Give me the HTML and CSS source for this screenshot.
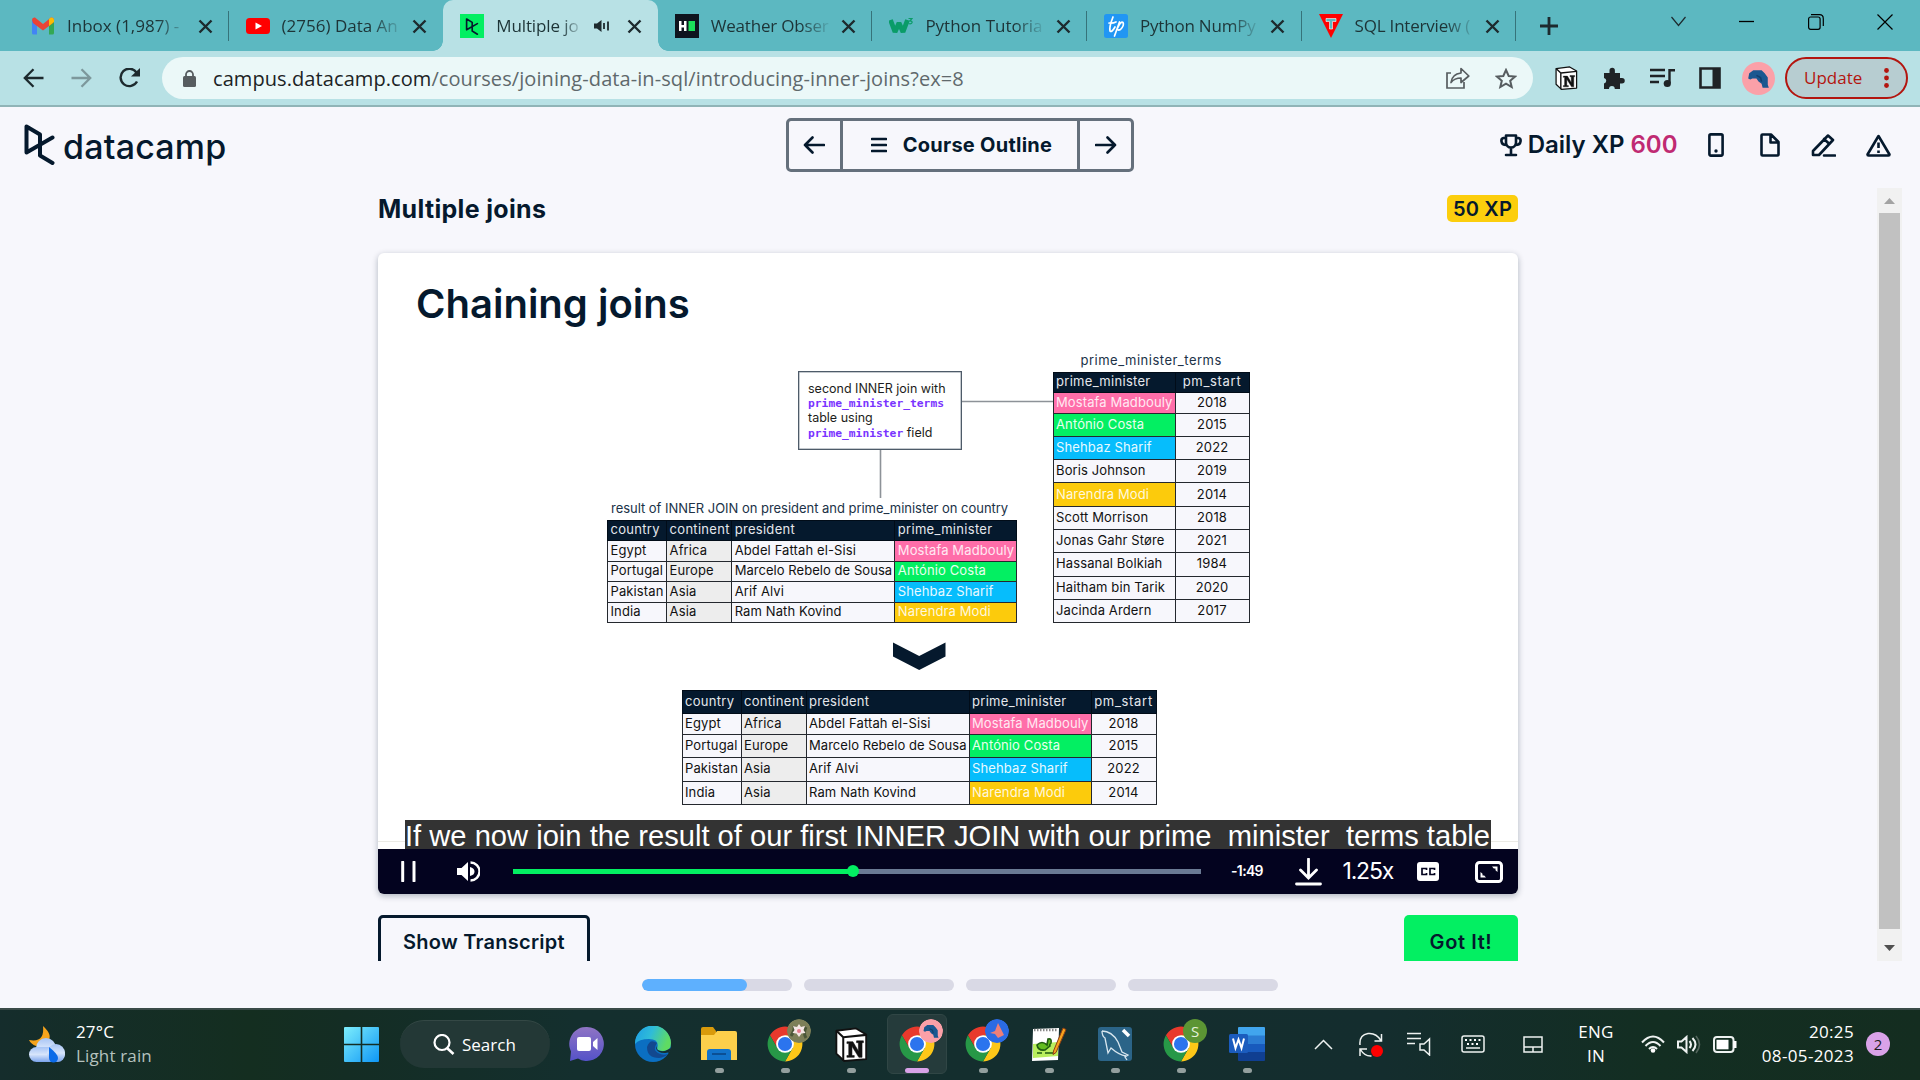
FILE: index.html
```html
<!DOCTYPE html>
<html lang="en">
<head>
<meta charset="utf-8">
<title>Multiple joins</title>
<link rel="stylesheet" href="styles.css">
</head>
<body>
<svg class="defs" width="0" height="0">
  <defs>
    <symbol id="x" viewBox="0 0 15 15"><path d="M1.500 1.500l12 12M13.500 1.500l-12 12" stroke="#1d2a2e" stroke-width="2.400" fill="none"/></symbol>
    <symbol id="dc" viewBox="0 0 31 41"><path d="M16 21.500V10.500L2.500 2.500V28.500L28.500 13.500M16 21.500V31.500L28.500 39" fill="none" stroke="currentColor" stroke-width="4" stroke-linejoin="round" stroke-linecap="round"/></symbol>
    <symbol id="chrome" viewBox="0 0 48 48">
      <path d="M24 13H43.050A22 22 0 0 0 4.950 13L14.470 29.500Z" fill="#e8392c"/>
      <path d="M24 13H43.050A22 22 0 0 1 24 46L33.530 29.500Z" fill="#fdc718"/>
      <path d="M4.950 13A22 22 0 0 0 24 46L33.530 29.500H14.470Z" fill="#279847"/>
      <circle cx="24" cy="24" r="11.200" fill="#fff"/><circle cx="24" cy="24" r="8.900" fill="#2b74ee"/>
    </symbol>
    <symbol id="notion" viewBox="0 0 36 38">
      <path d="M1.500 4L23 1.500L34 8V35L10 37L1.500 29Z" fill="#fff" stroke="#111" stroke-width="2" stroke-linejoin="round"/>
      <path d="M1.500 4L9 11V37M9 11L34 8.500" fill="none" stroke="#111" stroke-width="2.200"/>
      <path d="M13 16h6.500l6 10V17h-2v-2H31v2h-1.500v16h-3.500l-7.500-12V31h2.500v2H13v-2h2V18h-2z" fill="#111" stroke="#111" stroke-width=".6"/>
    </symbol>
    <symbol id="elephant" viewBox="0 0 32 32"><circle cx="16" cy="16" r="16" fill="#fba0a8"/><path d="M6 16L7 11L11 8H19L22 11L25 15V22L26 25H20L19 21L16 19L14 16H10L8 17Z" fill="#1b5790"/><path d="M14 13l4 2 1 4" stroke="#123f6d" stroke-width="1.500" fill="none"/></symbol>
  </defs>
</svg>

<div class="tabstrip">
  <div class="tab">
    <svg class="fav" viewBox="0 0 24 24"><path d="M1 6v13q0 1.500 1.500 1.500H6V9z" fill="#4285f4"/><path d="M18 9v11.500h3.500q1.500 0 1.500-1.500V6z" fill="#34a853"/><path d="M1 6q0-3 3-2.500L12 10l8-6.500q3-.5 3 2.500l-1 3-10 7.500L2 9z" fill="#ea4335"/><path d="M18 5l2-1.500q3-.5 3 2.500v2l-5 4z" fill="#fbbc04"/></svg>
    <span class="label">Inbox (1,987) -</span><svg class="close"><use href="#x"/></svg>
  </div>
  <div class="tab nosep">
    <svg class="fav" viewBox="0 0 24 24"><rect y="4" width="24" height="16" rx="3.500" fill="#f00"/><path d="M9.500 8.500v7l6.500-3.500z" fill="#fff"/></svg>
    <span class="label">(2756) Data An</span><svg class="close"><use href="#x"/></svg>
  </div>
  <div class="tab active nosep">
    <span class="fav dcfav"><svg width="14" height="17"><use href="#dc"/></svg></span>
    <span class="label short">Multiple jo</span>
    <svg class="audio" viewBox="0 0 16 14"><path d="M0 4.500h3L7.500 1v12L3 9.500H0z" fill="#1d2a2e"/><path d="M10 4v6M14 2.500v9" stroke="#1d2a2e" stroke-width="1.800"/></svg>
    <svg class="close"><use href="#x"/></svg>
  </div>
  <div class="tab">
    <svg class="fav" viewBox="0 0 24 24"><path d="M0 0h24v24H0z" fill="#0e141e"/><path d="M4 7h2.500v4H9V7h2.500v10H9v-3.500H6.500V17H4z" fill="#fff"/><path d="M13.500 7H20v10h-6.500z" fill="#1be05a"/></svg>
    <span class="label tight">Weather Obser</span><svg class="close"><use href="#x"/></svg>
  </div>
  <div class="tab">
    <svg class="fav" viewBox="0 0 24 24"><path d="M1.500 6l4.500 12 4-9 4 9 4.500-12" fill="none" stroke="#0a9c68" stroke-width="4.800" stroke-linejoin="bevel"/><path d="M19.500 4.500H23l-2 2.300q2.500.2 2 2-.8 1.500-3.500.7" fill="none" stroke="#0a9c68" stroke-width="1.200"/></svg>
    <span class="label">Python Tutoria</span><svg class="close"><use href="#x"/></svg>
  </div>
  <div class="tab">
    <svg class="fav" viewBox="0 0 24 24"><rect width="24" height="24" rx="2.500" fill="#2196f3"/><path d="M9 3Q5 13 6 17q1.500 2 5-4M5 9q4 .5 7-1M15.500 8l-5 14M14 13q3-6 5-4.500 1.500 3-2.500 7-3 1.500-3-1" fill="none" stroke="#fff" stroke-width="1.700" stroke-linecap="round"/></svg>
    <span class="label tight">Python NumPy</span><svg class="close"><use href="#x"/></svg>
  </div>
  <div class="tab">
    <svg class="fav" viewBox="0 0 24 24"><path d="M0 0h24L12 24z" fill="#f00"/><path d="M7 4.500h10v3h-3.500V15h-3V7.500H7z" fill="#5cb8c1" stroke="#fff" stroke-width=".6"/></svg>
    <span class="label tight">SQL Interview (</span><svg class="close"><use href="#x"/></svg>
  </div>
  <svg class="plus" width="18" height="18"><path d="M9 0v18M0 9h18" stroke="#1d2a2e" stroke-width="2.800"/></svg>
  <div class="winctl">
    <svg width="15" height="15"><path d="M.5 3l7 8.500L14.500 3" fill="none" stroke="#1d2a2e" stroke-width="1.200"/></svg>
    <svg width="15" height="15"><path d="M0 7.500h15" stroke="#000" stroke-width="1.300"/></svg>
    <svg width="16" height="16"><rect x=".6" y="3" width="11.500" height="12.300" rx="2" fill="none" stroke="#000" stroke-width="1.200"/><path d="M3 .7h8.500q3.800 0 3.800 4V12" fill="none" stroke="#000" stroke-width="1.200"/></svg>
    <svg width="16" height="16"><path d="M.5.5l15 15M15.500.5l-15 15" stroke="#000" stroke-width="1.200"/></svg>
  </div>
</div>

<div class="toolbar">
  <svg class="back" width="21" height="20"><path d="M20.500 10H2M10.500 1.200L1.800 10l8.700 8.800" fill="none" stroke="#1d2a2e" stroke-width="2.300"/></svg>
  <svg class="fwd" width="21" height="20"><path d="M.5 10H19M10.500 1.200l8.700 8.800-8.700 8.800" fill="none" stroke="#7d989c" stroke-width="2.300"/></svg>
  <svg class="reload" width="22" height="20"><path d="M17.500 4.500A8.700 8.700 0 1 0 18 13.500" fill="none" stroke="#1d2a2e" stroke-width="2.400"/><path d="M21 0v8.500h-9z" fill="#1d2a2e"/></svg>
  <div class="omnibox">
    <svg width="13" height="17"><rect y="6" width="13" height="11" rx="1.500" fill="#575d60"/><path d="M3 7V4.500a3.500 3.500 0 0 1 7 0V7" fill="none" stroke="#575d60" stroke-width="1.800"/></svg>
    <span class="url"><b>campus.datacamp.com</b>/courses/joining-data-in-sql/introducing-inner-joins?ex=8</span>
    <svg class="share" width="24" height="22"><path d="M5 6H1v15h17v-6" fill="none" stroke="#575d60" stroke-width="1.700"/><path d="M5 15.500Q6 7 15 6V1.500L22.800 9 15 15.500V11Q8.500 11 5 15.500z" fill="none" stroke="#575d60" stroke-width="1.700" stroke-linejoin="round"/></svg>
    <svg class="star" width="22" height="21"><path d="M11 2l2.700 6 6.300.6-4.800 4.200L16.700 19 11 15.700 5.300 19l1.500-6.200L2 8.600 8.300 8z" fill="none" stroke="#575d60" stroke-width="2"/></svg>
  </div>
  <svg class="ext" width="23" height="24"><use href="#notion"/></svg>
  <svg class="puzzle" width="22" height="22"><path d="M1 6h5.500V3.500a2.700 2.700 0 0 1 5.400 0V6H17v5h2a2.700 2.700 0 0 1 0 5.500h-2V22h-5.200a2.900 2.900 0 0 0-5.800 0H1v-5.500a2.800 2.800 0 0 0 0-5.500z" fill="#1f2326"/></svg>
  <svg class="queue" width="25" height="20"><path d="M0 2h15M0 8h15M0 14h9" stroke="#1f2326" stroke-width="2.300"/><path d="M19.500 15V2.200H25" fill="none" stroke="#1f2326" stroke-width="2.400"/><circle cx="17.300" cy="15.500" r="3.600" fill="#1f2326"/></svg>
  <svg class="panel" width="22" height="22"><path d="M1.500 1.500h19v19h-19z" fill="none" stroke="#1f2326" stroke-width="2.600"/><path d="M13.500 1.500h7v19h-7z" fill="#1f2326"/></svg>
  <svg class="avatar" width="33" height="33"><use href="#elephant"/></svg>
  <div class="update"><span>Update</span><svg width="5" height="20"><g fill="#b3150f"><circle cx="2.500" cy="2.500" r="2.400"/><circle cx="2.500" cy="10" r="2.400"/><circle cx="2.500" cy="17.500" r="2.400"/></g></svg></div>
</div>

<header class="head">
  <div class="logo"><svg width="31" height="41"><use href="#dc"/></svg><span>datacamp</span></div>
  <nav class="nav">
    <div class="cell side prev"><svg width="22" height="18"><path d="M21 9H2M9.500 1.500L2 9l7.500 7.500" class="ln"/></svg></div>
    <div class="cell mid"><svg width="16" height="16"><path d="M1 2h14M1 8h14M1 14h14" class="ln"/></svg><span>Course Outline</span></div>
    <div class="cell side"><svg width="22" height="18"><path d="M1 9h19M12.500 1.500L20 9l-7.500 7.500" class="ln"/></svg></div>
  </nav>
  <div class="tools">
    <svg class="cup" width="22" height="23"><path d="M6 1.500h10v7a5 5 0 0 1-10 0zM6 4H3.500Q1 4.500 1.500 7.500 2 11 6.500 11M16 4h2.500q2.500.5 2 3.500-.5 3.500-5 3.500M11 14v7M6 21h10" class="ln"/></svg>
    <span class="xp">Daily XP <em>600</em></span>
    <svg class="phone" width="16" height="24"><rect x="1.400" y="1.400" width="13.200" height="21.200" rx="1.500" class="ln"/><circle cx="8" cy="18" r="1.700" fill="#05192d"/></svg>
    <svg class="file" width="20" height="24"><path d="M1.500 2.500q0-1 1-1H11l7.500 7.500v12.500q0 1-1 1h-15q-1 0-1-1zM10.500 1.500V9.500h8" class="ln"/></svg>
    <svg class="pen" width="25" height="24"><path d="M2 18L17 2.500l5 4.500L8 22H2zM13 6l5.500 5M13 22.500h11" class="ln"/></svg>
    <svg class="warn" width="25" height="23"><path d="M12.500 2L1.500 20.500q0 1 1 1h20q1 0 1-1z" class="ln"/><path d="M12.500 8.500v5.500M12.500 16.500v2.500" stroke="#05192d" stroke-width="2.600"/></svg>
  </div>
</header>

<main class="scroll">
  <section class="content">
    <div class="titlebar"><h1>Multiple joins</h1><span class="badge">50 XP</span></div>
    <div class="card">
      <div class="slide">
        <h2>Chaining joins</h2>
        <svg class="wires" width="1140" height="596"><path d="M583 148.500h92M502.500 197v48" stroke="#8d9298" stroke-width="1.600"/><path d="M515 389.500l26.200 13.500L567.500 389.500V403.500L541.200 417 515 403.500z" fill="#05192d"/><path d="M0 588.500h27M1113 588.500h27" stroke="#ebebe6"/></svg>
        <div class="note"><div>second INNER join with</div><div><code>prime_minister_terms</code></div><div>table using</div><div><code>prime_minister</code> field</div></div>
        <p class="cap capr">prime_minister_terms</p>
        <table class="terms">
          <colgroup><col class="pm"><col class="yr"></colgroup>
          <tr class="h"><th>prime_minister<th class="c">pm_start</tr>
          <tr class="s"><td class="pink">Mostafa Madbouly<td class="c">2018</tr>
          <tr><td class="green">António Costa<td class="c">2015</tr>
          <tr><td class="blue">Shehbaz Sharif<td class="c">2022</tr>
          <tr><td>Boris Johnson<td class="c">2019</tr>
          <tr><td class="gold">Narendra Modi<td class="c">2014</tr>
          <tr><td>Scott Morrison<td class="c">2018</tr>
          <tr><td>Jonas Gahr Støre<td class="c">2021</tr>
          <tr><td>Hassanal Bolkiah<td class="c">1984</tr>
          <tr><td>Haitham bin Tarik<td class="c">2020</tr>
          <tr><td>Jacinda Ardern<td class="c">2017</tr>
        </table>
        <p class="cap capl">result of INNER JOIN on president and prime_minister on country</p>
        <table class="first">
          <colgroup><col class="co"><col class="ct"><col class="pr"><col class="pm"></colgroup>
          <tr><th>country<th>continent<th>president<th>prime_minister</tr>
          <tr><td>Egypt<td class="grey">Africa<td>Abdel Fattah el-Sisi<td class="pink">Mostafa Madbouly</tr>
          <tr><td>Portugal<td class="grey">Europe<td class="snug">Marcelo Rebelo de Sousa<td class="green">António Costa</tr>
          <tr><td>Pakistan<td class="grey">Asia<td>Arif Alvi<td class="blue">Shehbaz Sharif</tr>
          <tr><td>India<td class="grey">Asia<td>Ram Nath Kovind<td class="gold">Narendra Modi</tr>
        </table>
        <table class="final">
          <colgroup><col class="co"><col class="ct"><col class="pr"><col class="pm"><col class="yr"></colgroup>
          <tr><th>country<th>continent<th>president<th>prime_minister<th class="c">pm_start</tr>
          <tr class="s"><td>Egypt<td class="grey">Africa<td>Abdel Fattah el-Sisi<td class="pink">Mostafa Madbouly<td class="c">2018</tr>
          <tr><td>Portugal<td class="grey">Europe<td class="snug">Marcelo Rebelo de Sousa<td class="green">António Costa<td class="c">2015</tr>
          <tr><td>Pakistan<td class="grey">Asia<td>Arif Alvi<td class="blue">Shehbaz Sharif<td class="c">2022</tr>
          <tr><td>India<td class="grey">Asia<td>Ram Nath Kovind<td class="gold">Narendra Modi<td class="c">2014</tr>
        </table>
        <div class="subtitle">If we now join the result of our first INNER JOIN with our prime_minister_terms table</div>
      </div>
      <div class="player">
        <svg class="pause" width="15" height="21"><path d="M1.700 1v19M13 1v19" stroke="#fff" stroke-width="3" stroke-linecap="round"/></svg>
        <svg class="vol" width="23" height="21"><path d="M0 7h4.500L11 1v19l-6.500-6H0z" fill="#fff"/><path d="M13.500 1.500a9 9 0 0 1 0 18" fill="none" stroke="#fff" stroke-width="2.400"/><path d="M13 6q4.500 1 4.500 4.500T13 15z" fill="#fff"/></svg>
        <div class="track"><div class="played"></div><div class="knob"></div></div>
        <span class="time">-1:49</span>
        <svg class="dl" width="27" height="28"><path d="M13.500 1v18M5.500 12l8 8 8-8M1.500 26h24" fill="none" stroke="#fff" stroke-width="2.800" stroke-linecap="round"/></svg>
        <span class="rate">1.25x</span>
        <svg class="cc" width="22" height="19"><rect width="22" height="19" rx="3" fill="#fff"/><path d="M9.500 8V6.500H5v6h4.500V11M17.500 8V6.500H13v6h4.500V11" fill="none" stroke="#03031f" stroke-width="1.700"/></svg>
        <svg class="full" width="28" height="22"><rect x="1.500" y="1.500" width="25" height="19" rx="3" fill="none" stroke="#fff" stroke-width="3"/><path d="M5.500 11v5.500h5.500l-1.800-2H7.500v-1.700zM22.500 11V5.500H17l1.800 2h1.700v1.700z" fill="#fff"/></svg>
      </div>
    </div>
    <div class="actions"><button class="outline">Show Transcript</button><button class="go">Got It!</button></div>
  </section>
  <div class="scrollbar">
    <svg width="25" height="25"><path d="M7 16l5.500-6 5.500 6z" fill="#a3a3a3"/></svg>
    <div class="thumb"></div>
    <svg width="25" height="32"><path d="M7 16l5.500 6 5.500-6z" fill="#505050"/></svg>
  </div>
</main>
<div class="steps"><i class="part"></i><i></i><i></i><i></i></div>

<footer class="taskbar">
  <svg class="weather" width="37" height="37"><defs><linearGradient id="cl" x2="0" y2="1"><stop stop-color="#a7c4f5"/><stop offset=".5" stop-color="#d7e5fb"/><stop offset="1" stop-color="#7aa3ec"/></linearGradient></defs><path d="M14 0Q25 10 18 16L7 20Q2 18 0 14Q16 17 14 0z" fill="#f7a41c"/><circle cx="17" cy="22" r="10" fill="url(#cl)"/><rect y="21" width="36" height="15" rx="7.500" fill="url(#cl)"/><circle cx="27" cy="27" r="9" fill="url(#cl)"/><path d="M20 21Q29 28 29 32a4.500 4.500 0 0 1-9 0z" fill="#0b6be8"/></svg>
  <div class="wtext"><span>27°C</span><span class="dim">Light rain</span></div>
  <svg class="win" width="35" height="35"><defs><linearGradient id="wg" x2="1" y2="1"><stop stop-color="#7deefc"/><stop offset="1" stop-color="#0e96f5"/></linearGradient></defs><path d="M0 1q0-1 1-1h15.700v16.700H0zM18.300 0H34q1 0 1 1v15.700H18.300zM0 18.300h16.700V35H1q-1 0-1-1zM18.300 18.300H35V34q0 1-1 1H18.300z" fill="url(#wg)"/></svg>
  <div class="search"><svg width="22" height="21"><circle cx="9" cy="8.500" r="7.500" fill="none" stroke="#fff" stroke-width="2.200"/><path d="M14 14l6.500 6" stroke="#fff" stroke-width="2.600"/></svg><span>Search</span></div>
  <div class="apps">
    <div class="app"><svg width="36" height="36"><defs><linearGradient id="tg" x2="0" y2="1"><stop stop-color="#8f74c4"/><stop offset="1" stop-color="#5552c8"/></linearGradient></defs><path d="M18 1a17 17 0 1 1-9 31.500L1 35l1-9.500A17 17 0 0 1 18 1z" fill="url(#tg)"/><rect x="8" y="11" width="14" height="14" rx="2" fill="#fff"/><path d="M24 16l4.500-4v12L24 20z" fill="#fff"/></svg></div>
    <div class="app"><svg width="36" height="36"><defs><linearGradient id="eg" x2="1" y2=".3"><stop stop-color="#1c9de6"/><stop offset=".5" stop-color="#2fbcd8"/><stop offset="1" stop-color="#5fdb62"/></linearGradient></defs><circle cx="18" cy="18" r="18" fill="#0b6fc2"/><path d="M0 18A18 18 0 0 1 36 17Q36 25 28 25Q21 25 22.500 21Q24 13 14 13Q4 13 0 18z" fill="url(#eg)"/><path d="M22 17Q15 12 12 21Q12 32 24 32Q30 31 33 28Q28 30 23 27Q17 24 22 17z" fill="#12488f"/><path d="M21 22Q22 27 30 27Q34 26 34 27L36 22L30 25Q20 26 22 20z" fill="#152e2f"/></svg></div>
    <div class="app"><svg width="36" height="36"><path d="M0 3q0-2 2-2h10l3 4v7H0z" fill="#d99a0b"/><path d="M0 9h13l3-4h18q2 0 2 2v27H0z" fill="#fdcf4b"/><path d="M6 34v-8q0-3 3-3h18q3 0 3 3v8z" fill="#1273ca"/><path d="M11 28h14" stroke="#0b4f94" stroke-width="2"/></svg><i></i></div>
    <div class="app"><svg width="38" height="38"><use href="#chrome"/></svg><svg class="mini" viewBox="0 0 24 24"><circle cx="12" cy="12" r="12" fill="#7d7f58"/><path d="M4 17q4-6 3-10M19 19q-3-5 0-11" stroke="#4b5638" stroke-width="3" fill="none"/><path d="M12 5l2 3 4-1-1.500 4 2 3-4 .5L12 18l-2.500-3.500-4-.5 2-3L6 7l4 1z" fill="#f4e6e4"/><circle cx="12" cy="12" r="2" fill="#e57c8c"/></svg><i></i></div>
    <div class="app"><svg width="33" height="35"><use href="#notion"/></svg><i></i></div>
    <div class="app on"><svg width="38" height="38"><use href="#chrome"/></svg><svg class="mini"><use href="#elephant"/></svg><i></i></div>
    <div class="app"><svg width="38" height="38"><use href="#chrome"/></svg><svg class="mini" viewBox="0 0 24 24"><circle cx="12" cy="12" r="12" fill="#2b6be4"/><path d="M13 4l6 12-6 3-3-4-5-1 5-2z" fill="#ee7f78"/></svg><i></i></div>
    <div class="app"><svg width="36" height="36"><path d="M2 3l26-1-1 32-26 1z" fill="#fff"/><path d="M3 4h24" stroke="#888" stroke-width="2.500" stroke-dasharray="1.500 1.500"/><path d="M2 18l25-2v14l-25 2z" fill="#b9ee5e"/><path d="M6 19q5-5 10 0l1-6q4-1 3 4-2 2-1 3l-5 4q-7 1-8-5zM14 27h8M6 27h5" fill="#63bd21" stroke="#205c12" stroke-width="1.600"/><path d="M32 2l3 1.500-10 23-3 2 .5-3.500z" fill="#f6a21c" stroke="#8d3e14"/></svg><i></i></div>
    <div class="app"><svg width="34" height="34"><rect width="34" height="34" rx="3" fill="#2b6488"/><path d="M4 4q10 0 16 11l4 10 6 3-3 2 2 3M4 4q0 5 3 7l2 10 1 5 3-5q8 7 15 8" fill="none" stroke="#d8e6ee" stroke-width="1.300"/><path d="M25 3l6 6" stroke="#fff" stroke-width="3.500"/></svg><i></i></div>
    <div class="app"><svg width="38" height="38"><use href="#chrome"/></svg><span class="mini letter">S</span><i></i></div>
    <div class="app"><svg width="36" height="34"><path d="M9 1q0-1 1-1h25q1 0 1 1v8H9z" fill="#41a5ee"/><path d="M9 8.500h27V17H9z" fill="#2b7cd3"/><path d="M9 17h27v8H9z" fill="#185abd"/><path d="M9 25h27v8q0 1-1 1H10q-1 0-1-1z" fill="#103f91"/><rect y="7" width="19" height="19" rx="1.500" fill="#1b5cbe"/><path d="M4 11.500l2.500 9.500 3-8.500 3 8.500L15 11.500" fill="none" stroke="#fff" stroke-width="2"/></svg><i></i></div>
  </div>
  <div class="tray">
    <svg class="up" width="19" height="11"><path d="M1 10l8.500-8.500L18 10" class="w"/></svg>
    <svg class="sync" width="24" height="25"><path d="M1 13Q0 3 9 1.500q8-1 13 7M22.500 2v7h-7M1 24v-7h7M1.500 17.500q4 7 11 6.500" class="w"/><circle cx="18" cy="19" r="6" fill="#f00"/></svg>
    <svg class="lsp" width="24" height="24"><path d="M0 1.500h14M0 6.500h14M0 11.500h8M13 12h4l5.500-5v16L17 18h-4z" class="w"/></svg>
    <svg class="kb" width="24" height="18"><rect x="1" y="1" width="22" height="16" rx="2" class="w"/><path d="M4 5h16M6 9h12" stroke="#fff" stroke-width="2" stroke-dasharray="2 2.500"/><path d="M5 13h14" class="w"/></svg>
    <svg class="pad" width="20" height="17"><path d="M1 1h18v15H1zM1 11h18M10 11v5" class="w"/></svg>
    <div class="lang"><span>ENG</span><span>IN</span></div>
    <svg class="wifi" width="24" height="18"><path d="M1 7.500q11-12 22 0M4.500 11q7.500-8 15 0M8 14q4-4 8 0" class="w b"/><circle cx="12" cy="15.500" r="2.300" fill="#fff"/></svg>
    <svg class="snd" width="24" height="19"><path d="M1 6.500h3.500L9.500 2v15L4.500 12.500H1zM12.500 6q3 3.500 0 7M15.500 3q6 6.500 0 13" class="w b"/><path d="M19 1q7 8.500 0 17" fill="none" stroke="#53655c" stroke-width="1.600"/></svg>
    <svg class="bat" width="25" height="17"><rect x="1" y="1" width="19.500" height="15" rx="3" class="w b"/><rect x="3.500" y="3.800" width="12" height="9.500" fill="#fff"/><path d="M22 5v7" stroke="#fff" stroke-width="3"/></svg>
    <div class="clock"><span>20:25</span><span>08-05-2023</span></div>
    <span class="count">2</span>
  </div>
</footer>
</body>
</html>
```
FILE: styles.css
```css
* { box-sizing: border-box; }
body { margin: 0; width: 1920px; height: 1080px; overflow: hidden; display: flex; flex-direction: column; background: #f7f7fc; font-family: "Open Sans", sans-serif; color: #05192d; }
svg { display: block; flex: none; }
.defs { position: absolute; }
.ln { fill: none; stroke: #05192d; stroke-width: 2.600; stroke-linecap: round; stroke-linejoin: round; }
.w { fill: none; stroke: #eef2f1; stroke-width: 1.500; }
.w.b { stroke-width: 2; }

.tabstrip { height: 51px; flex: none; background: #5cb8c1; display: flex; align-items: center; padding-left: 14px; }
.tab { position: relative; width: 214.600px; height: 51px; flex: none; display: flex; align-items: center; padding: 1px 0 0 17px; }
.tab::after { content: ""; position: absolute; right: 0; top: 11px; width: 1px; height: 30px; background: #36737a; }
.tab.nosep::after { display: none; }
.tab.active { background: #b8e1e5; border-radius: 10px 10px 0 0; }
.tab.active::before, .tab.active::after { display: block; content: ""; position: absolute; bottom: 0; top: auto; width: 10px; height: 10px; background: radial-gradient(circle at 0 0, transparent 9.500px, #b8e1e5 10px); }
.tab.active::before { left: -10px; right: auto; }
.tab.active::after { right: -10px; transform: scaleX(-1); }
.fav { width: 24px; height: 24px; flex: none; }
.dcfav { background: #03ef62; display: flex; align-items: center; justify-content: center; color: #05192d; }
.label { width: 125px; margin-left: 12px; white-space: nowrap; font-size: 17px; line-height: 26px; color: #1d3437; -webkit-mask-image: linear-gradient(90deg, #000 72%, transparent 97%); mask-image: linear-gradient(90deg, #000 72%, transparent 97%); }
.label.tight { letter-spacing: -0.200px; }
.label.short { width: 90px; letter-spacing: -0.100px; }
.close { width: 15px; height: 15px; margin-left: 5.500px; }
.audio { width: 16px; height: 14px; margin-left: 8px; }
.audio + .close { margin-left: 17px; }
.plus { margin-left: 24px; }
.winctl { display: flex; gap: 53.500px; margin-left: auto; padding-right: 27px; margin-bottom: 7px; }

.toolbar { height: 56px; flex: none; background: #b8e1e5; border-bottom: 2px solid #90b4b7; display: flex; align-items: center; padding-left: 22.500px; }
.fwd { margin-left: 27px; }
.reload { margin-left: 27.500px; }
.omnibox { margin-left: 21px; width: 1371px; height: 42px; border-radius: 21px; background: #ebf8f8; display: flex; align-items: center; padding-left: 21px; }
.url { margin-left: 17px; font-size: 20px; line-height: 28px; letter-spacing: 0.080px; color: #5f696c; white-space: nowrap; padding-top: 1px; }
.url b { font-weight: 400; color: #1c2325; }
.share { margin-left: auto; }
.star { margin: 0 16px 0 25px; }
.ext { margin-left: 22px; }
.puzzle { margin-left: 25px; }
.queue { margin-left: 25px; }
.panel { margin-left: 24px; }
.avatar { margin-left: 21px; }
.update { margin-left: 10px; width: 123px; height: 42px; border: 2px solid #b3150f; border-radius: 21px; background: #b7cdd1; display: flex; align-items: center; padding: 0 17px 1px 17px; justify-content: space-between; color: #b3150f; font-size: 17px; }

.head { height: 81px; flex: none; padding-bottom: 5px; display: grid; grid-template-columns: 1fr auto 1fr; align-items: center; font-family: Inter, sans-serif; }
.logo { display: flex; align-items: center; gap: 8px; padding: 0 0 2px 24px; }
.logo span { font-size: 34px; line-height: 40px; padding-top: 5px; font-weight: 500; letter-spacing: 0.200px; }
.nav { display: flex; height: 54px; width: 348px; border: 3px solid #65707c; border-radius: 5px; }
.cell { display: flex; align-items: center; justify-content: center; }
.side { width: 51px; }
.prev { padding-right: 2px; }
.mid { flex: 1; border: solid #65707c; border-width: 0 3px; gap: 16px; padding-left: 3px; font-size: 20px; font-weight: 700; letter-spacing: 0.250px; }
.tools { display: flex; align-items: center; justify-content: flex-end; padding-right: 29.500px; }
.xp { margin: 0 30.500px 0 6px; padding-bottom: 2px; font-size: 24px; font-weight: 600; letter-spacing: 0; white-space: nowrap; }
.xp em { font-style: normal; color: #c02a72; }
.file { margin-left: 36px; }
.pen { margin-left: 31px; }
.warn { margin-left: 29.500px; }

.scroll { height: 773px; flex: none; display: flex; justify-content: space-between; padding: 0 18px 0 378px; overflow: hidden; font-family: Inter, sans-serif; }
.content { width: 1140px; display: flex; flex-direction: column; }
.titlebar { height: 41px; margin-bottom: 24px; flex: none; display: flex; align-items: center; justify-content: space-between; }
h1 { margin: 0; font-size: 25px; font-weight: 700; letter-spacing: 0.320px; }
.badge { width: 71px; height: 27px; line-height: 28px; text-align: center; border-radius: 5px; background: #fcce0d; font-size: 20px; font-weight: 600; letter-spacing: 0.200px; }
.card { height: 641px; flex: none; border-radius: 6px; overflow: hidden; background: #fff; box-shadow: 0 2px 6px rgba(5,25,45,.3); display: flex; flex-direction: column; }
.slide { position: relative; height: 596px; overflow: hidden; }
h2 { position: absolute; left: 38px; top: 27px; margin: 0; font-size: 40px; line-height: 48px; font-weight: 600; white-space: nowrap; }
.wires { position: absolute; left: 0; top: 0; }
.note { position: absolute; left: 420px; top: 118px; width: 164px; height: 79px; border: 1px solid #4e5b69; box-shadow: inset 0 0 0 .5px #8b95a0; background: #fff; padding: 8.500px 0 0 9px; font-size: 12.500px; color: #1d1d20; white-space: nowrap; }
.note div { height: 14.900px; line-height: 15px; }
code { font: bold 11.300px/12px "DejaVu Sans Mono", monospace; color: #7933ff; }
.cap { position: absolute; margin: 0; font-size: 13px; line-height: 20px; color: #203247; white-space: nowrap; }
.capr { left: 702.500px; top: 97px; letter-spacing: 0.500px; }
.capl { left: 233px; top: 245px; letter-spacing: -0.030px; }
table { position: absolute; border-collapse: collapse; table-layout: fixed; font-size: 13px; line-height: 15px; color: #111; background: #f7f7fc; }
td, th { border: 1px solid #24282e; padding: 0 0 1px 2px; text-align: left; font-weight: 400; white-space: nowrap; letter-spacing: 0.120px; }
th { background: #05192d; border-color: #010c18; color: #e4e7ec; letter-spacing: 0.300px; padding-bottom: 2px; }
td.c, th.c { text-align: center; padding: 0 0 1px; }
th.c { letter-spacing: 0.700px; padding-bottom: 2px; }
td.snug { letter-spacing: 0.050px; }
.terms { left: 675px; top: 119px; width: 196px; }
.terms tr { height: 23.300px; }
.terms tr.h { height: 20px; }
.terms tr.s { height: 20.500px; }
.first { left: 229px; top: 267px; width: 410px; }
.first tr { height: 20.400px; }
.first td, .first th { padding-left: 2.500px; }
.final { left: 304px; top: 437px; width: 474px; }
.final tr { height: 23.400px; }
.final tr.s { height: 20.500px; }
.co { width: 59px; } .ct { width: 65px; } .pr { width: 163px; } .pm { width: 121.500px; } .yr { width: 65px; }
.terms .yr { width: 74px; }
.pink { background: #ff6ea9; color: #ffe9f2; }
.green { background: #03ef62; color: #e8ffee; }
.blue { background: #06bdfc; color: #e8f9ff; }
.gold { background: #fccb0c; color: #fff8df; }
.grey { background: #ededed; }
.subtitle { position: absolute; left: 27px; top: 567px; width: 1086px; height: 29px; overflow: hidden; background: #333; color: #fff; font: 29.150px/32px "Liberation Sans", sans-serif; white-space: nowrap; }
.player { height: 45px; flex: none; background: #03031f; display: flex; align-items: center; padding-left: 23px; color: #fff; }
.vol { margin-left: 41px; }
.track { position: relative; width: 688px; height: 5px; margin-left: 33px; background: #6a7a94; }
.played { width: 340px; height: 5px; background: #03ef62; }
.knob { position: absolute; left: 334px; top: -4px; width: 12px; height: 12px; border-radius: 50%; background: #03ef62; }
.time { width: 33px; margin-left: 30px; font-size: 14px; font-weight: 600; white-space: nowrap; letter-spacing: -0.650px; padding-bottom: 2px; }
.dl { margin-left: 31px; }
.rate { width: 54px; margin-left: 20.500px; font-size: 23px; white-space: nowrap; letter-spacing: -1.200px; padding-bottom: 1px; }
.cc { margin-left: 20.500px; }
.full { margin-left: 35.500px; }
.actions { margin-top: 21px; flex: none; display: flex; justify-content: space-between; }
button { height: 60px; border-radius: 5px; font: 600 20px/24px Inter, sans-serif; letter-spacing: 0.250px; color: #05192d; padding: 0 0 6px; white-space: nowrap; }
.outline { width: 212px; border: 3px solid #05192d; background: #f7f7fc; }
.go { width: 114px; border: 0; background: #03ef62; letter-spacing: 0.600px; }
.scrollbar { width: 25px; background: #f1f1f1; display: flex; flex-direction: column; align-items: center; }
.thumb { width: 21px; flex: 1; background: #c1c1c1; }
.steps { height: 47px; flex: none; display: flex; justify-content: center; gap: 12px; padding-top: 18px; }
.steps i { width: 150px; height: 12px; border-radius: 6px; background: #d9d9e5; overflow: hidden; }
.part::before { content: ""; display: block; width: 105px; height: 12px; border-radius: 6px; background: #5eb0fe; }

.taskbar { height: 72px; flex: none; border-top: 2px solid #3a4b48; background: linear-gradient(90deg, #152d2c 0, #142e20 13%, #142d24 18%, #142f2e 30%, #142d2e 72%, #132e22 86%, #142d20 100%); display: flex; align-items: center; padding-bottom: 2px; color: #fff; font-size: 17px; line-height: 24px; white-space: nowrap; }
.weather { margin-left: 29px; }
.wtext { width: 100px; margin-left: 10px; display: flex; flex-direction: column; letter-spacing: 0.150px; }
.dim { color: #b5c2be; }
.win { margin-left: 168px; }
.search { width: 150px; height: 48px; margin-left: 21px; border-radius: 24px; background: #233836; border-top: 1px solid #344845; display: flex; align-items: center; padding-left: 33px; gap: 7px; }
.apps { display: flex; margin-left: 7px; gap: 6px; }
.app { position: relative; width: 60px; height: 60px; border-radius: 6px; display: flex; align-items: center; justify-content: center; }
.app.on { background: #253b3b; border: 1px solid #304645; }
.app i { position: absolute; bottom: 1px; left: 25.500px; width: 9px; height: 5px; border-radius: 3px; background: #939f9e; }
.app.on i { left: 17px; width: 24px; bottom: 0; background: #d9a2e8; }
.mini { position: absolute; left: 32px; top: 5px; width: 24px; height: 24px; border-radius: 50%; }
.on .mini { left: 31px; top: 4px; }
.letter { background: #5c9534; text-align: center; font: 15px/24px "Open Sans", sans-serif; color: #e6f2dc; }
.tray { display: flex; align-items: center; margin-left: 37px; }
.sync { margin-left: 26px; }
.lsp { margin-left: 24px; }
.kb { margin-left: 30px; }
.pad { margin-left: 38px; }
.lang { width: 50px; margin-left: 28px; display: flex; flex-direction: column; align-items: center; letter-spacing: 0.300px; }
.wifi { margin-left: 20px; }
.snd { margin-left: 12px; }
.bat { margin-left: 12px; }
.clock { width: 98px; margin-left: 18px; display: flex; flex-direction: column; align-items: flex-end; letter-spacing: 0.350px; }
.count { width: 24px; height: 24px; margin-left: 12px; border-radius: 50%; background: #d9a2e8; color: #1d1d20; text-align: center; font-size: 15px; }
```
